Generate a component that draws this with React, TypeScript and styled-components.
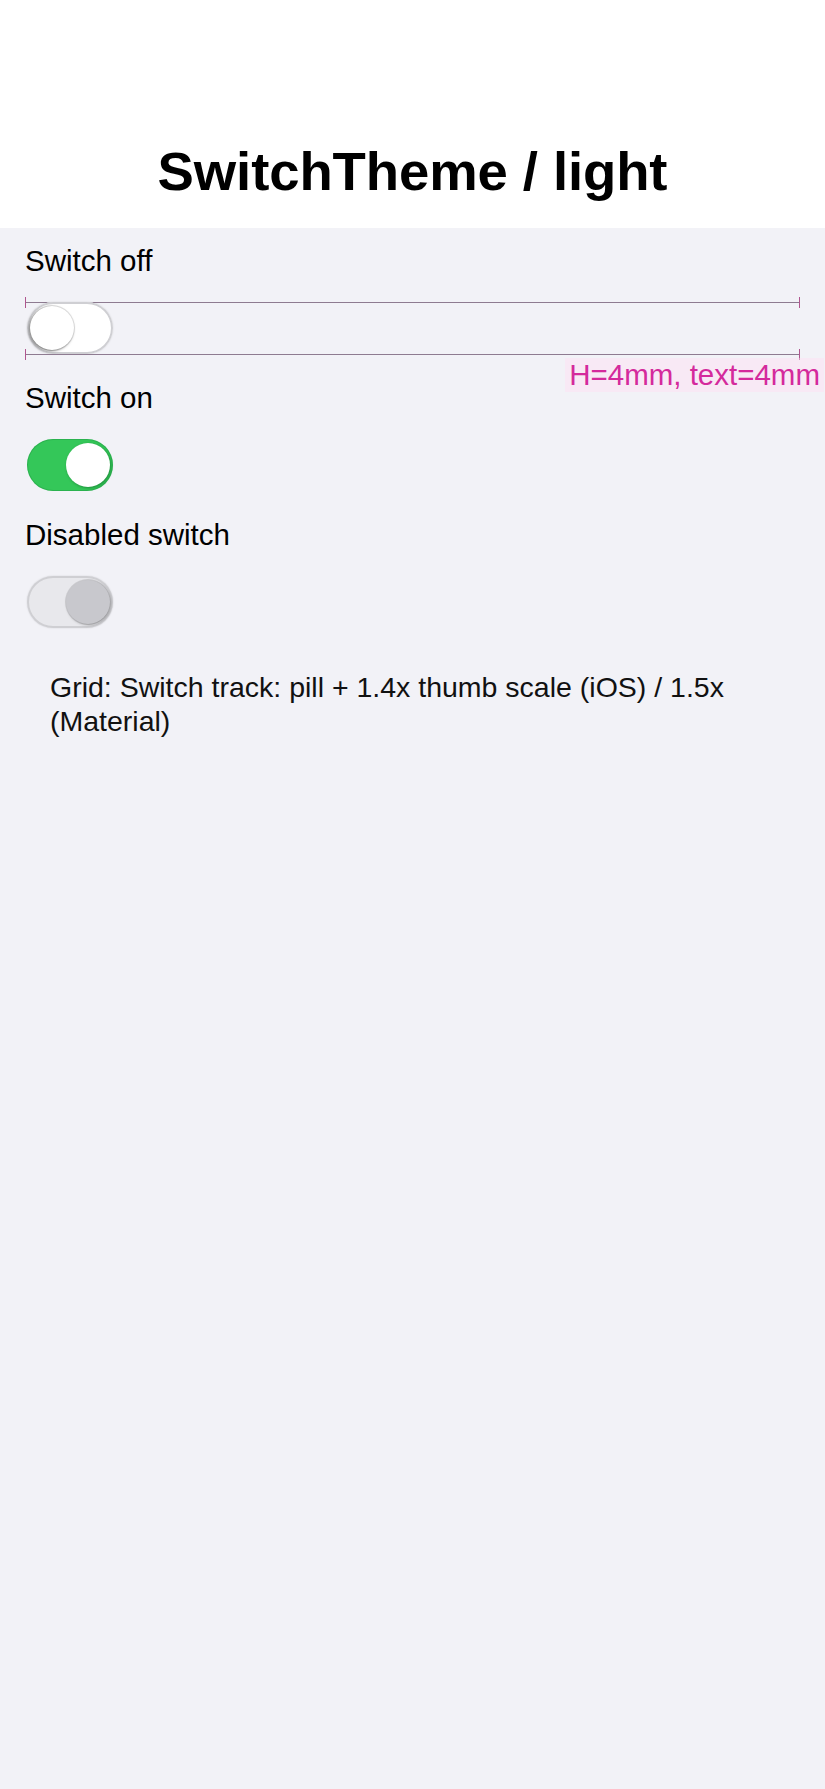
import React from 'react';
import styled, {createGlobalStyle} from "styled-components";

type SwitchMode = "off" | "on" | "disabled";

const GlobalStyle = createGlobalStyle`
  html, body {
    margin: 0;
    padding: 0;
    background-color: #f2f2f7;
    font-family: "Liberation Sans", Arial, sans-serif;
    color: #000;
  }
`

export default function App() {
    return <>
        <GlobalStyle/>
        <StyledPage>
            <StyledHeader>
                <h1>SwitchTheme / light</h1>
            </StyledHeader>
            <StyledContent>
                <StyledSection>
                    <StyledLabel>Switch off</StyledLabel>
                    <MeasuredRow>
                        <GuideLine $edge="top"/>
                        <Switch mode="off"/>
                        <GuideLine $edge="bottom"/>
                        <StyledNote>H=4mm, text=4mm</StyledNote>
                    </MeasuredRow>
                </StyledSection>
                <StyledSection>
                    <StyledLabel>Switch on</StyledLabel>
                    <SwitchRow>
                        <Switch mode="on"/>
                    </SwitchRow>
                </StyledSection>
                <StyledSection>
                    <StyledLabel>Disabled switch</StyledLabel>
                    <SwitchRow>
                        <Switch mode="disabled"/>
                    </SwitchRow>
                </StyledSection>
                <StyledCaption>
                    Grid: Switch track: pill + 1.4x thumb scale (iOS) / 1.5x (Material)
                </StyledCaption>
            </StyledContent>
        </StyledPage>
    </>;
}

function Switch(props: { mode: SwitchMode }) {
    return <StyledTrack $mode={props.mode} role="switch" aria-checked={props.mode !== "off"}>
        <StyledThumb $mode={props.mode}/>
    </StyledTrack>;
}

const StyledPage = styled.div`
  min-height: 1789px;
  background-color: #f2f2f7;
`

const StyledHeader = styled.header`
  background-color: #ffffff;
  height: 228px;
  box-sizing: border-box;
  display: flex;
  justify-content: center;
  align-items: flex-end;
  padding-bottom: 24px;

  h1 {
    margin: 0;
    font-size: 54.5px;
    line-height: 64px;
    font-weight: 700;
    letter-spacing: -0.1px;
  }
`

const StyledContent = styled.main`
  display: flex;
  flex-direction: column;
  gap: 26px;
  padding: 15px 25px 0 25px;
`

const StyledSection = styled.section`
  display: flex;
  flex-direction: column;
  gap: 23px;
`

const StyledLabel = styled.div`
  font-size: 29.5px;
  line-height: 36px;
  color: #000;
`

const SwitchRow = styled.div`
  height: 52px;
  display: flex;
  align-items: center;
  padding-left: 2px;
`

const MeasuredRow = styled(SwitchRow)`
  position: relative;
`

const GuideLine = styled.div<{ $edge: "top" | "bottom" }>`
  position: absolute;
  left: 0;
  right: 0;
  ${p => p.$edge === "top" ? "top: 0;" : "bottom: -1px;"}
  height: 1px;
  background-color: #8e7b91;
  pointer-events: none;

  &::before, &::after {
    content: "";
    position: absolute;
    top: -5px;
    width: 1px;
    height: 11px;
    background-color: #b0568f;
  }

  &::before {
    left: 0;
  }

  &::after {
    right: 0;
  }
`

const StyledNote = styled.span`
  position: absolute;
  top: 100%;
  right: -24px;
  margin-top: 4px;
  padding: 0 4px;
  font-size: 29.5px;
  line-height: 34px;
  color: #d42a9c;
  background-color: rgba(255, 222, 242, 0.45);
  white-space: nowrap;
`

const StyledTrack = styled.div<{ $mode: SwitchMode }>`
  position: relative;
  width: 86px;
  height: 52px;
  box-sizing: border-box;
  border-radius: 26px;
  background-color: ${p => p.$mode === "on" ? "#34c759" : p.$mode === "off" ? "#ffffff" : "#e8e8ec"};
  box-shadow: ${p => p.$mode === "on"
          ? "inset 0 0 0 1px rgba(30, 140, 60, 0.35)"
          : "inset 0 0 0 2px #cfcfd3, 0 0 2px rgba(0, 0, 0, 0.12)"};
`

const StyledThumb = styled.div<{ $mode: SwitchMode }>`
  position: absolute;
  top: 4px;
  ${p => p.$mode === "off" ? "left: 3px;" : "right: 3px;"}
  width: 44px;
  height: 44px;
  border-radius: 50%;
  background-color: ${p => p.$mode === "disabled" ? "#c8c8cd" : "#ffffff"};
  box-shadow: ${p => p.$mode === "on"
          ? "1px 1px 3px rgba(0, 70, 20, 0.45)"
          : p.$mode === "off"
                  ? "-1px 1px 3px rgba(0, 0, 0, 0.5), 0 0 0 1px rgba(0, 0, 0, 0.1)"
                  : "1px 1px 3px rgba(0, 0, 0, 0.3), 0 0 0 1px rgba(0, 0, 0, 0.1)"};
`

const StyledCaption = styled.p`
  margin: 16px 0 0 0;
  padding: 0 27px 0 25px;
  font-size: 28.5px;
  line-height: 34px;
  color: #111;
`
